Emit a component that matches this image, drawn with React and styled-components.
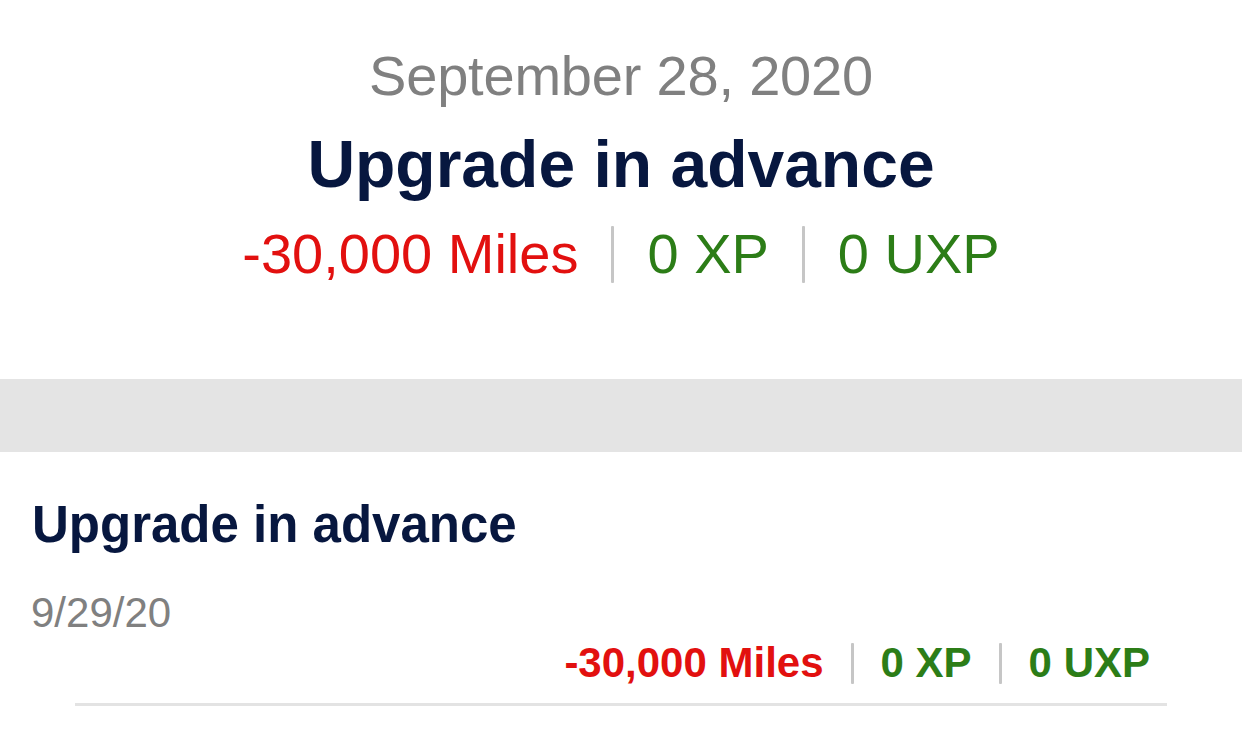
import React from "react";
import styled, { createGlobalStyle } from "styled-components";

const GlobalStyle = createGlobalStyle`
  html, body {
    margin: 0;
    padding: 0;
    background: #ffffff;
    font-family: "Liberation Sans", Arial, Helvetica, sans-serif;
  }
`;

const RED = "#e2100f";
const GREEN = "#2c7d17";
const NAVY = "#07173f";
const GREY = "#808080";

const Page = styled.div`
  width: 1242px;
  display: flex;
  flex-direction: column;
`;

const Summary = styled.section`
  display: flex;
  flex-direction: column;
  align-items: center;
  padding: 44px 0 93px;
`;

const DayLabel = styled.div`
  font-size: 56px;
  line-height: 64px;
  color: ${GREY};
  letter-spacing: -0.2px;
`;

const SummaryTitle = styled.h1`
  margin: 18px 0 0;
  font-size: 66px;
  line-height: 76px;
  font-weight: 700;
  color: ${NAVY};
`;

const Stats = styled.div`
  display: flex;
  align-items: center;
  gap: ${(p) => p.$gap}px;
  margin-top: ${(p) => p.$top || 0}px;
  font-size: ${(p) => p.$size}px;
  line-height: ${(p) => p.$line}px;
  font-weight: ${(p) => (p.$bold ? 700 : 400)};
  justify-content: ${(p) => (p.$right ? "flex-end" : "center")};
  padding-right: ${(p) => (p.$right ? 92 : 0)}px;
`;

const Value = styled.span`
  color: ${(p) => (p.$negative ? RED : GREEN)};
  white-space: nowrap;
`;

const Sep = styled.span`
  width: 3px;
  height: ${(p) => p.$h}px;
  background: #c6c6c6;
  border-radius: 1px;
`;

const Band = styled.div`
  height: 73px;
  background: #e4e4e4;
`;

const Entry = styled.section`
  display: flex;
  flex-direction: column;
  padding-top: 44px;
`;

const EntryTitle = styled.h2`
  margin: 0;
  padding-left: 32px;
  font-size: 51px;
  line-height: 58px;
  font-weight: 700;
  color: ${NAVY};
`;

const EntryDate = styled.div`
  margin-top: 35px;
  padding-left: 31px;
  font-size: 42px;
  line-height: 48px;
  color: ${GREY};
`;

const Divider = styled.hr`
  margin: 16px 75px 0;
  border: 0;
  height: 3px;
  background: #e3e3e3;
`;

function StatLine({ miles, xp, uxp, ...rest }) {
  return (
    <Stats {...rest}>
      <Value $negative>{miles} Miles</Value>
      <Sep $h={rest.$sepH} />
      <Value>{xp} XP</Value>
      <Sep $h={rest.$sepH} />
      <Value>{uxp} UXP</Value>
    </Stats>
  );
}

export default function App() {
  return (
    <Page>
      <GlobalStyle />
      <Summary>
        <DayLabel>September 28, 2020</DayLabel>
        <SummaryTitle>Upgrade in advance</SummaryTitle>
        <StatLine
          miles="-30,000"
          xp="0"
          uxp="0"
          $top={20}
          $size={56}
          $line={64}
          $gap={33}
          $sepH={57}
        />
      </Summary>
      <Band />
      <Entry>
        <EntryTitle>Upgrade in advance</EntryTitle>
        <EntryDate>9/29/20</EntryDate>
        <StatLine
          miles="-30,000"
          xp="0"
          uxp="0"
          $top={2}
          $size={42}
          $line={48}
          $gap={27}
          $sepH={41}
          $bold
          $right
        />
        <Divider />
      </Entry>
    </Page>
  );
}
